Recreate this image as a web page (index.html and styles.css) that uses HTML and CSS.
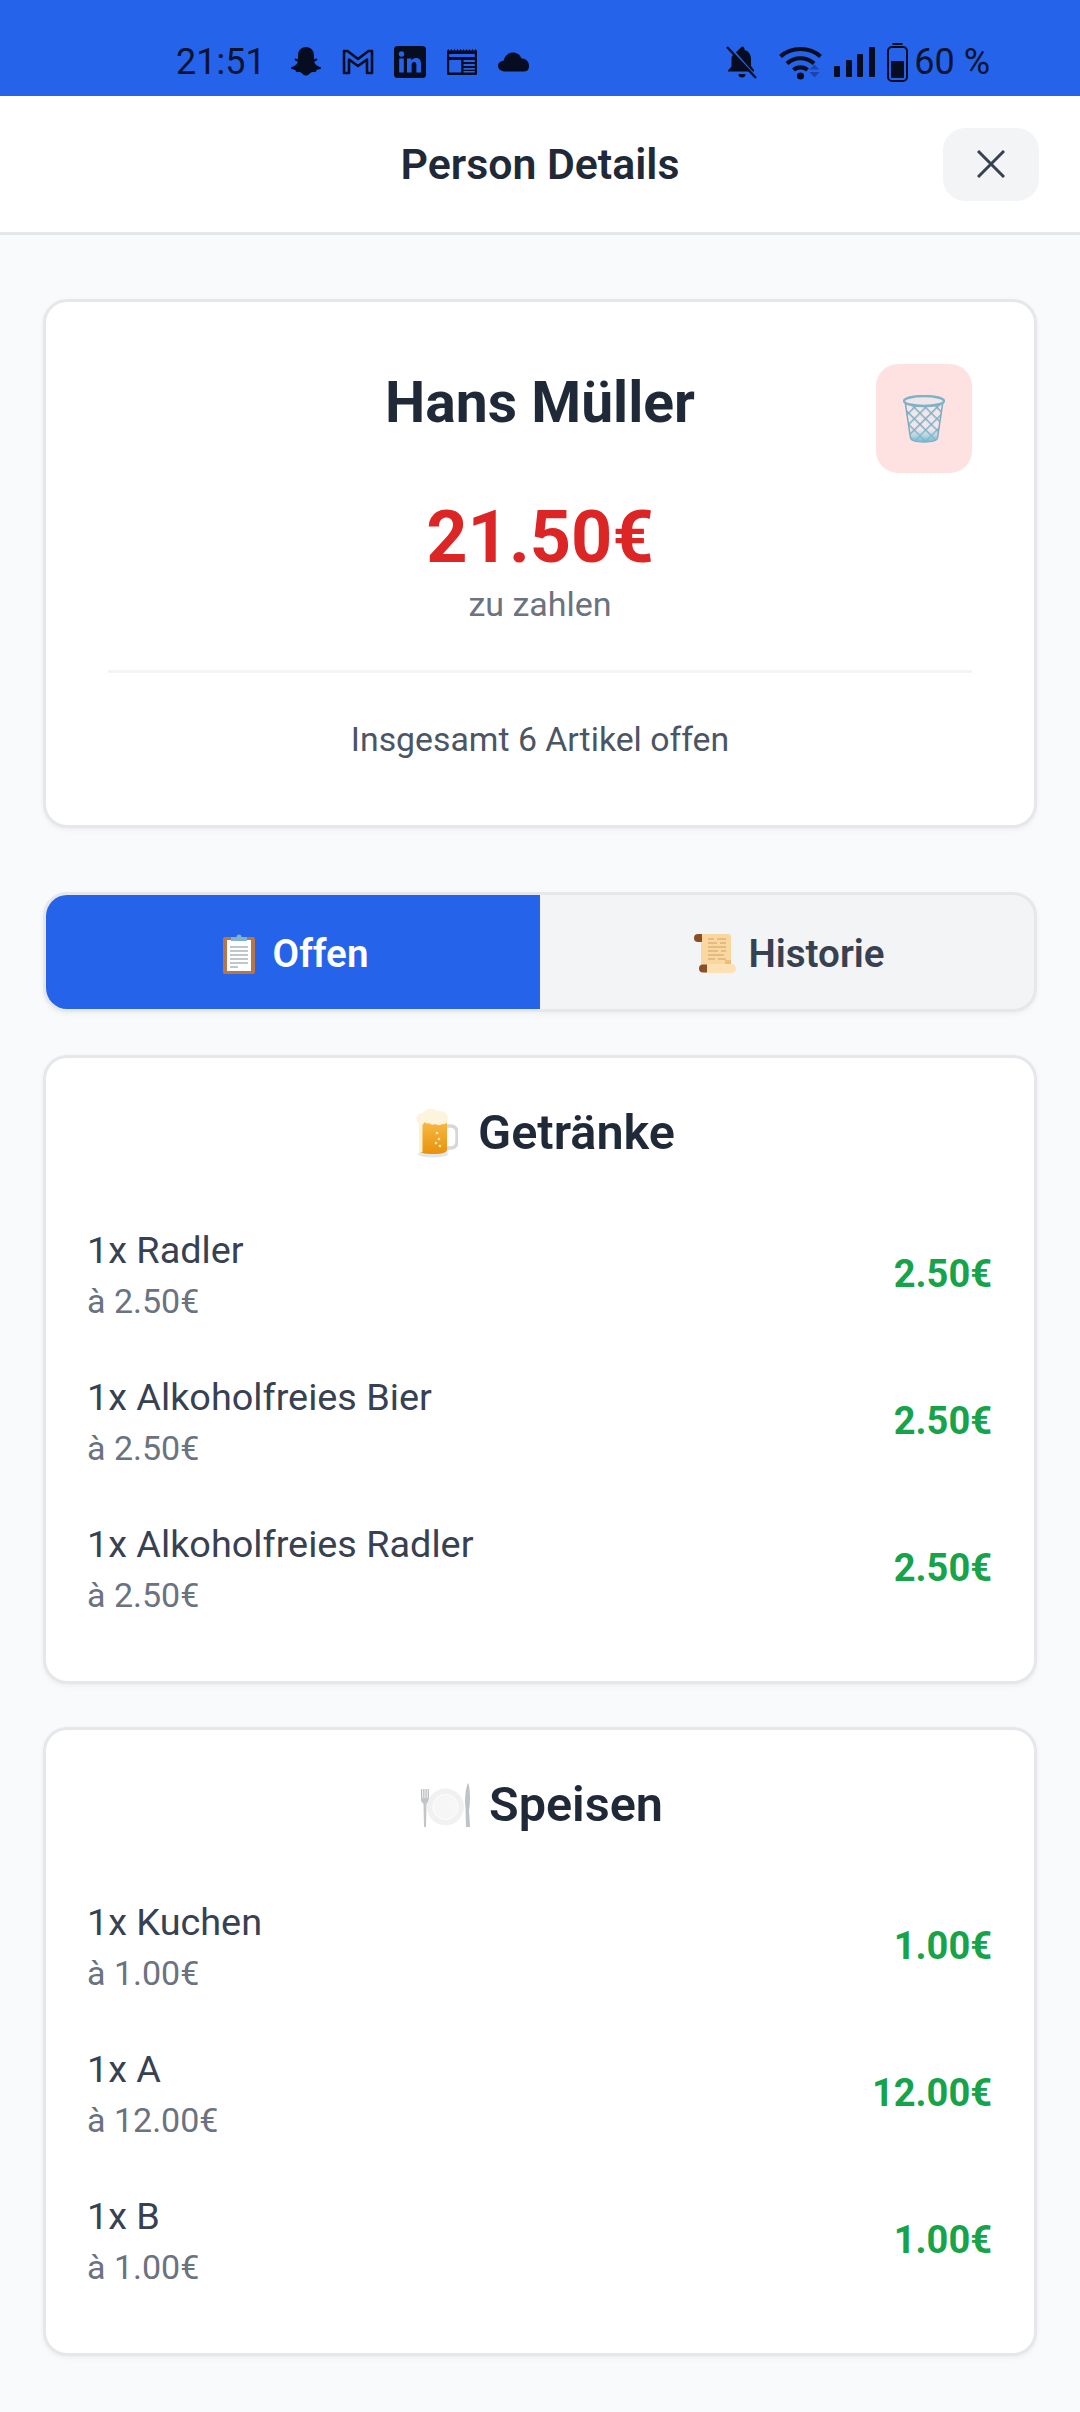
FILE: index.html
```html
<!DOCTYPE html>
<html>

<head>
    <meta charset="UTF-8">
    <title>Person Details</title>
    <link rel="stylesheet" href="styles.css">
</head>

<body>
    <div class="statusbar">
        <div class="status-left">
            <span class="status-time">21:51</span>
            <svg class="ic-snap" viewBox="0 0 32 32"><path fill="#060d21" d="M16 1c5 0 8 3.6 8 8.5v3.700l2.600-.6c1 .3 1 1.400.1 1.900-1 .6-2.400.9-2.400 1.600 0 1.700 3.400 4.400 6.200 5.200.9.3.7 1.200-.1 1.600-1.400.6-3 .6-3.700 1.100-.5.5-.3 1.600-1 2-1 .4-2.400-.2-4 .2-1.600.5-3 3.300-5.700 3.300s-4.100-2.800-5.700-3.300c-1.600-.4-3 .2-4-.2-.7-.4-.5-1.500-1-2-.7-.5-2.300-.5-3.700-1.100-.8-.4-1-1.300-.1-1.600 2.800-.8 6.200-3.500 6.200-5.200 0-.7-1.400-1-2.400-1.600-.9-.5-.9-1.600.1-1.900l2.600.6V9.500C8 4.600 11 1 16 1z"/></svg>
            <svg class="ic-gmail" viewBox="0 0 32 26"><path fill="none" stroke="#060d21" stroke-width="2.600" stroke-linejoin="round" d="M2 2h3.500L16 10 26.500 2H30v22h-5V10.500L16 17 7 10.500V24H2z"/></svg>
            <svg class="ic-in" viewBox="0 0 32 32"><rect width="32" height="32" rx="3.500" fill="#060d21"/><circle cx="7.500" cy="8" r="2.700" fill="#2563eb"/><rect x="5.200" y="12.500" width="4.600" height="14" fill="#2563eb"/><path fill="#2563eb" d="M13 12.500h4.400v2c.8-1.400 2.500-2.400 4.500-2.400 4 0 5.100 2.500 5.100 6.200v8.200h-4.600v-7.300c0-1.900-.4-3.200-2.200-3.200-1.900 0-2.600 1.300-2.600 3.200v7.300H13z"/></svg>
            <svg class="ic-news" viewBox="0 0 30 26"><path fill="#060d21" d="M0 2l1.500-2L3 2l1.500-2L6 2l1.500-2L9 2l1.500-2L12 2l1.500-2L15 2l1.500-2L18 2l1.500-2L21 2l1.500-2L24 2l1.500-2L27 2l1.500-2L30 2v22.500a1.500 1.500 0 0 1-1.500 1.500h-27A1.500 1.500 0 0 1 0 24.500z"/><path fill="#2563eb" d="M2.200 5h25.600v3H2.200zM2.200 11h12v12.500h-12zM16.500 11h11.300v2H16.500zM16.500 15h11.300v2H16.500zM16.500 19h11.300v1.800H16.500zM16.500 22h11.300v1.500H16.500z"/></svg>
            <svg class="ic-cloud" viewBox="0 0 32 20"><path fill="#060d21" d="M8 19.500C3.800 19.500.5 17.200.5 14c0-3 2.500-5 5.500-5.200C7 4 10.800.5 15.500.5c3.800 0 7 2.200 8.300 5.700 4.400.2 7.700 3.300 7.700 7.400 0 3.500-1 5.900-5 5.900z"/></svg>
        </div>
        <div class="status-right">
            <svg class="ic-bell" viewBox="0 0 32 34"><path fill="#060d21" d="M16 1.500a2.500 2.500 0 0 1 2.500 2.500v1c4.500 1.200 6.500 5 6.500 9v7l3 4v1.500H2V25.500l3.500-4V14c0-1 .2-2 .5-3zM12.500 29h7a3.500 3.500 0 0 1-7 0z"/><path stroke="#2563eb" stroke-width="2" d="M3 1l27 31"/><path stroke="#060d21" stroke-width="2.400" d="M1 2l29 31"/></svg>
            <svg class="ic-wifi" viewBox="0 0 44 36"><g fill="none" stroke="#060d21" stroke-width="4.200"><path d="M2 12.500C13 2.500 31 2.500 42 12.500"/><path d="M8.500 19.500c7.500-7 19.500-7 27 0"/><path d="M15 26c4-3.500 10-3.500 14 0"/></g><circle cx="22" cy="32" r="3.600" fill="#060d21"/><path fill="#1a45ab" d="M36 20.500l5 5H31zM31 28h10l-5 5.500z"/></svg>
            <svg class="ic-signal" viewBox="0 0 41 30"><g fill="#060d21"><rect x="0" y="19" width="6" height="11" rx="1"/><rect x="12" y="13" width="6" height="17" rx="1"/><rect x="23" y="7" width="6" height="23" rx="1"/><rect x="35" y="0" width="6" height="30" rx="1"/></g></svg>
            <svg class="ic-batt" viewBox="0 0 21 39"><rect x="5.500" y="0" width="10" height="2" fill="#060d21"/><rect x="1" y="4" width="19" height="34" rx="4" fill="none" stroke="#060d21" stroke-width="2"/><rect x="4" y="18" width="13" height="17" fill="#060d21"/></svg>
            <span class="status-batt">60 %</span>
        </div>
    </div>

    <header class="topbar">
        <span></span>
        <h1>Person Details</h1>
        <button class="close-btn">
            <svg class="ic-close" viewBox="0 0 28 28"><path stroke="#374151" stroke-width="3" d="M1 1l26 26M27 1L1 27"/></svg>
        </button>
    </header>

    <main>
        <section class="card person">
            <div class="person-head">
                <span></span>
                <h2>Hans Müller</h2>
                <button class="delete-btn">
                    <svg class="emoji-trash" viewBox="0 0 42 48">
                        <defs>
                            <pattern id="mesh" width="8" height="8" patternUnits="userSpaceOnUse" patternTransform="rotate(45)">
                                <rect width="8" height="8" fill="#f3e6ea"/>
                                <path d="M0 0h8M0 0v8" stroke="#7fb0c4" stroke-width="3"/>
                            </pattern>
                            <linearGradient id="binfoot" x1="0" y1="0" x2="0" y2="1">
                                <stop offset="0" stop-color="#8cc9dc" stop-opacity="0"/>
                                <stop offset="1" stop-color="#6fb9d0"/>
                            </linearGradient>
                        </defs>
                        <path d="M2 6l5.500 37c.3 2.500 6 4 13.500 4s13.200-1.500 13.500-4L40 6z" fill="url(#mesh)" stroke="#7ba9bd" stroke-width="1.500"/>
                        <path d="M6 34l1.500 9c.3 2.500 6 4 13.500 4s13.200-1.500 13.500-4L36 34z" fill="url(#binfoot)"/>
                        <ellipse cx="21" cy="6" rx="20" ry="5" fill="#f0e6ea" stroke="#7fb2c6" stroke-width="2.400"/>
                    </svg>
                </button>
            </div>
            <div class="amount">21.50€</div>
            <div class="amount-label">zu zahlen</div>
            <hr class="divider">
            <p class="summary">Insgesamt 6 Artikel offen</p>
        </section>

        <nav class="tabs">
            <div class="tab active">
                <svg class="emoji-clip" viewBox="0 0 32 42">
                    <rect x="0" y="5" width="32" height="37" rx="2" fill="#b5764a"/>
                    <rect x="4" y="8" width="24" height="31" fill="#fff"/>
                    <g stroke="#a9b4bf" stroke-width="1.300"><path d="M7 15h18M7 19h18M7 23h18M7 27h18M7 31h18M7 35h8"/></g>
                    <path d="M8 5h5.500a2.500 2.500 0 0 1 5 0H24v4H8z" fill="#82b4c8"/>
                </svg>
                <span>Offen</span>
            </div>
            <div class="tab">
                <svg class="emoji-scroll" viewBox="0 0 42 40">
                    <rect x="7" y="1" width="30" height="34" rx="3" fill="#fbd7a0"/>
                    <rect x="10" y="31" width="32" height="9" rx="4.500" fill="#fde0b3"/>
                    <path d="M31 27h6v4h-6z" fill="#eebd7d"/>
                    <g stroke="#d0a06a" stroke-width="1.200"><path d="M14 6h6M23 6h9M14 10h9M26 10h6M14 14h18M14 18h10M27 18h5M14 22h16M14 26h7M24 26h8"/></g>
                    <path d="M0 5a4 4 0 0 1 4-4h4v8H4a4 4 0 0 1-4-4z" fill="#8a4f25"/>
                    <path d="M5 35.500a4 4 0 0 1 4-4h4v8H9a4 4 0 0 1-4-4z" fill="#8a4f25"/>
                </svg>
                <span>Historie</span>
            </div>
        </nav>

        <section class="card group">
            <h3 class="group-title">
                <svg class="emoji-beer" viewBox="0 0 42 50">
                    <defs>
                        <linearGradient id="beer" x1="0" y1="0" x2="0" y2="1">
                            <stop offset="0" stop-color="#f9bd4a"/>
                            <stop offset="1" stop-color="#e8920c"/>
                        </linearGradient>
                    </defs>
                    <path d="M30 18h5a6 6 0 0 1 6 6v10a6 6 0 0 1-6 6h-5" fill="none" stroke="#d5d8da" stroke-width="3.500"/>
                    <ellipse cx="17" cy="46" rx="15" ry="3.500" fill="#e3e6e8"/>
                    <path d="M3 10h28v32c0 2.500-5 4-14 4S3 44.500 3 42z" fill="url(#beer)"/>
                    <rect x="3" y="14" width="3.500" height="30" fill="#fdf1d2"/>
                    <path d="M1.500 14C-1.500 9 2 5 7 5c2-4 10-6 14-2 5-1 11 2 11 7 0 5-3 7-6 6-2 2-5 1-7 0-2 1-4 1-6-1-2 1-3 .500-4-1-1 1-3 4-4 3-1.500-.500-3-1.500-3.500-3z" fill="#fdf4de"/>
                    <g fill="#fde9b4"><circle cx="21" cy="25" r="1.300"/><circle cx="23" cy="31" r="1.300"/><circle cx="20" cy="35" r="1.300"/><circle cx="24" cy="38" r="1.300"/></g>
                </svg>
                <span>Getränke</span>
            </h3>
            <ul class="items">
                <li class="item">
                    <div><div class="item-name">1x Radler</div><div class="item-each">à 2.50€</div></div>
                    <div class="item-price">2.50€</div>
                </li>
                <li class="item">
                    <div><div class="item-name">1x Alkoholfreies Bier</div><div class="item-each">à 2.50€</div></div>
                    <div class="item-price">2.50€</div>
                </li>
                <li class="item">
                    <div><div class="item-name">1x Alkoholfreies Radler</div><div class="item-each">à 2.50€</div></div>
                    <div class="item-price">2.50€</div>
                </li>
            </ul>
        </section>

        <section class="card group">
            <h3 class="group-title">
                <svg class="emoji-plate" viewBox="0 0 53 45">
                    <g fill="#b9bdbf"><rect x="2" y="6" width="1.300" height="11"/><rect x="4.200" y="6" width="1.300" height="11"/><rect x="6.400" y="6" width="1.300" height="11"/><rect x="8.600" y="6" width="1.300" height="11"/></g>
                    <path d="M2 15h8v3l-2.500 3-.5 23H5l-.5-23L2 18z" fill="#c2c6c8"/>
                    <circle cx="26.500" cy="24" r="18.500" fill="#f1f1f1"/>
                    <circle cx="26.500" cy="24" r="12.500" fill="#f6f6f6" stroke="#fff" stroke-width="1"/>
                    <path d="M49 0c2.500 3 2.500 24 1 27l1 17h-4l-.5-19c-1-8 0-20 2.500-25z" fill="#bfc3c5"/>
                </svg>
                <span>Speisen</span>
            </h3>
            <ul class="items">
                <li class="item">
                    <div><div class="item-name">1x Kuchen</div><div class="item-each">à 1.00€</div></div>
                    <div class="item-price">1.00€</div>
                </li>
                <li class="item">
                    <div><div class="item-name">1x A</div><div class="item-each">à 12.00€</div></div>
                    <div class="item-price">12.00€</div>
                </li>
                <li class="item">
                    <div><div class="item-name">1x B</div><div class="item-each">à 1.00€</div></div>
                    <div class="item-price">1.00€</div>
                </li>
            </ul>
        </section>
    </main>
</body>

</html>
```

FILE: styles.css
```css
* {
    box-sizing: border-box;
}

html,
body {
    margin: 0;
    padding: 0;
}

body {
    font-family: Roboto, "Liberation Sans", sans-serif;
    background-color: #f9fafb;
    min-height: 2412px;
}

svg {
    display: block;
    flex: none;
}

/* status bar */
.statusbar {
    height: 96px;
    background-color: #2563eb;
    color: #0a1430;
    display: flex;
    justify-content: space-between;
    align-items: center;
    padding: 28px 90px 0 176px;
    font-size: 36px;
}

.status-left,
.status-right {
    display: flex;
    align-items: center;
}

.status-time {
    width: 114px;
}

.ic-snap {
    width: 32px;
    height: 32px;
}

.ic-gmail {
    width: 32px;
    height: 26px;
    margin-left: 20px;
}

.ic-in {
    width: 32px;
    height: 32px;
    margin-left: 20px;
}

.ic-news {
    width: 30px;
    height: 26px;
    margin-left: 21px;
}

.ic-cloud {
    width: 33px;
    height: 20px;
    margin-left: 20px;
}

.ic-bell {
    width: 32px;
    height: 34px;
}

.ic-wifi {
    width: 45px;
    height: 36px;
    margin-left: 20px;
}

.ic-signal {
    width: 43px;
    height: 30px;
    margin-left: 10px;
}

.ic-batt {
    width: 21px;
    height: 39px;
    margin-left: 11px;
}

.status-batt {
    margin-left: 6px;
}

/* top bar */
.topbar {
    height: 139px;
    background-color: #fff;
    border-bottom: 3px solid #e5e7eb;
    display: grid;
    grid-template-columns: 1fr auto 1fr;
    align-items: center;
    padding: 0 41px;
}

.topbar h1 {
    margin: 0;
    font-size: 42.8px;
    font-weight: 600;
    color: #1f2937;
}

.close-btn {
    justify-self: end;
    width: 96px;
    height: 73px;
    border: none;
    border-radius: 22px;
    background-color: #f3f4f6;
    display: flex;
    align-items: center;
    justify-content: center;
    padding: 0;
}

.ic-close {
    width: 28px;
    height: 28px;
}

/* page */
main {
    display: flex;
    flex-direction: column;
    gap: 43px;
    padding: 64px 43px 0;
}

.card {
    background-color: #fff;
    border: 3px solid #e5e7eb;
    border-radius: 24px;
    box-shadow: 0 2px 5px rgba(0, 0, 0, 0.05);
}

/* person card */
.person {
    padding: 62px 62px 61px;
    margin-bottom: 21px;
    text-align: center;
}

.person-head {
    display: grid;
    grid-template-columns: 1fr auto 1fr;
    align-items: start;
}

.person-head h2 {
    margin: 0;
    font-size: 57px;
    line-height: 78px;
    font-weight: 700;
    color: #1f2937;
}

.delete-btn {
    justify-self: end;
    width: 96px;
    height: 109px;
    border: none;
    border-radius: 22px;
    background-color: #fee2e2;
    display: flex;
    align-items: center;
    justify-content: center;
    padding: 0;
}

.emoji-trash {
    width: 42px;
    height: 48px;
}

.amount {
    margin-top: 23px;
    font-size: 72px;
    line-height: 84px;
    font-weight: 700;
    color: #dc2626;
}

.amount-label {
    font-size: 34px;
    line-height: 48px;
    color: #6b7280;
}

.divider {
    border: none;
    height: 3px;
    background-color: #f3f4f6;
    margin: 42px 0 43px;
}

.summary {
    margin: 0;
    font-size: 33.8px;
    line-height: 48px;
    color: #4b5563;
}

/* tabs */
.tabs {
    display: grid;
    grid-template-columns: 1fr 1fr;
    height: 120px;
    background-color: #f3f4f6;
    border: 3px solid #e5e7eb;
    border-radius: 24px;
    overflow: hidden;
    box-shadow: 0 2px 5px rgba(0, 0, 0, 0.05);
}

.tab {
    display: flex;
    align-items: center;
    justify-content: center;
    gap: 12px;
    padding: 2px 0 0 5px;
    font-size: 38.6px;
    font-weight: 600;
    color: #374151;
}

.tab.active {
    background-color: #2563eb;
    color: #fff;
}

.emoji-clip {
    width: 32px;
    height: 42px;
    margin-right: 6px;
}

.emoji-scroll {
    width: 42px;
    height: 40px;
}

/* item groups */
.group {
    padding: 43px 42px 62px 41px;
}

.group-title {
    margin: 0 0 58px;
    display: flex;
    align-items: center;
    justify-content: center;
    gap: 20px;
    font-size: 48.6px;
    line-height: 64px;
    font-weight: 600;
    color: #1f2937;
}

.emoji-beer {
    width: 42px;
    height: 50px;
    margin-left: 12px;
}

.emoji-plate {
    width: 53px;
    height: 45px;
    margin-left: 3px;
    margin-right: -3px;
}

.items {
    list-style: none;
    margin: 0;
    padding: 0;
    display: flex;
    flex-direction: column;
    gap: 45px;
}

.item {
    display: flex;
    justify-content: space-between;
    align-items: center;
}

.item-name {
    font-size: 37.8px;
    line-height: 54px;
    color: #374151;
}

.item-each {
    font-size: 34px;
    line-height: 48px;
    color: #6b7280;
}

.item-price {
    font-size: 38px;
    font-weight: 700;
    color: #16a34a;
}
```
